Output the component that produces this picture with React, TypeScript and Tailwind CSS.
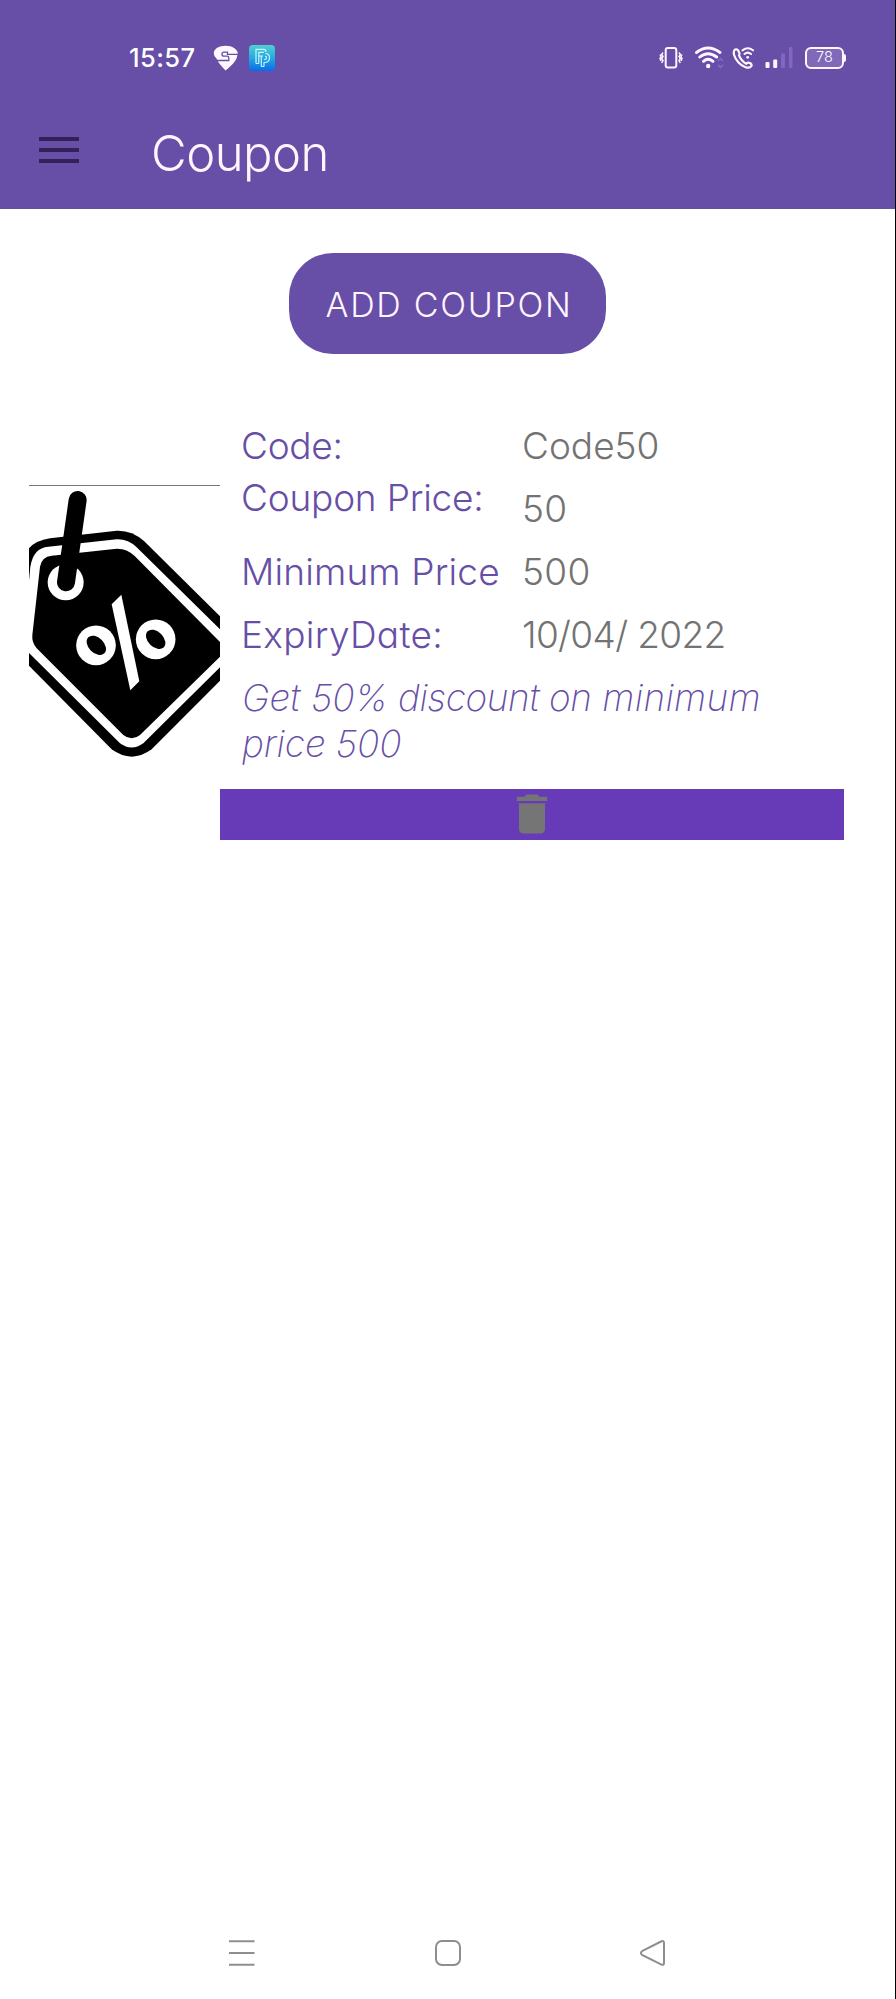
import type { ReactNode } from "react";

const purple = "#674ea7";

function StatusBar() {
  return (
    <div className="flex h-[115px] items-center pl-[129px] pr-[49px] text-white">
      <span className="w-[84px] whitespace-nowrap text-[25.500px] font-medium leading-none tracking-[0.4px]">15:57</span>
      <svg className="h-[26px] w-[26px]" viewBox="0 0 26 26">
        <path
          d="M12.500 25.500C9 22 6 18.500 4.300 15.300L3.500 13.500Q.8 11.500 .8 8.500C.8 3.500 6 .7 12.700 .7C19.500 .7 24 4 24.800 8L24.300 10.500C23.500 16.500 17.500 21.500 12.500 25.500Z"
          fill="#fdf8ff"
        />
        <path d="M25.500 9.300H14.500V7.200H11Q9 7.200 9 9.200T11 11.200H14Q15.800 11.200 15.800 13V15.500H3" fill="none" stroke={purple} strokeWidth="1.300" />
      </svg>
      <svg className="ml-[10px] h-[26px] w-[26px]" viewBox="0 0 26 26">
        <defs>
          <linearGradient id="app" x1="0" y1="0" x2="0" y2="1">
            <stop offset="0" stopColor="#4fd0cf" />
            <stop offset="0.500" stopColor="#25a9e2" />
            <stop offset="1" stopColor="#0a6be8" />
          </linearGradient>
        </defs>
        <rect width="26" height="26" rx="4" fill="url(#app)" />
        <path d="M7 18.500V4.300H14.500Q17 4.300 17 7M9.800 18.500V7.300H15M9.800 11H14M7 18.500H9.800M12.300 21.500V11.500M15 21.500V17.500Q20.500 17.500 20.500 13T16.500 8.500M12.300 21.500H15M15 14.500H16Q17.500 14.500 17.500 12.800T16 11.300" fill="none" stroke="#c8f6ff" strokeWidth="1.200" />
      </svg>

      <div className="ml-auto flex items-center">
        <svg className="h-[24px] w-[24px]" viewBox="0 0 24 24" fill="none" stroke="#fff5ff">
          <rect x="6.700" y="2" width="10.600" height="19.500" rx="2.200" strokeWidth="2" />
          <path d="M4 6.500L2.700 8.500L4 10.500L2.700 12.500L4 14.500L2.700 17M1 8.500L2 10.500L1 12.500L2 15M20 6.500L21.300 8.500L20 10.500L21.300 12.500L20 14.500L21.300 17M23 8.500L22 10.500L23 12.500L22 15" strokeWidth="1.500" />
        </svg>
        <svg className="ml-[12px] h-[24px] w-[30px]" viewBox="0 0 30 24" fill="none" stroke="#fff5ff">
          <path d="M1.500 6.500Q13 -2.500 25 6.500M4.800 11Q13 4.300 21.700 11M8.500 15.300Q13 11.300 18 15.300" strokeWidth="2.900" strokeLinecap="round" />
          <circle cx="13.200" cy="20" r="2.200" fill="#fff5ff" stroke="none" />
          <path d="M23 15L25.500 12.500L28 15M23 19L25.500 21.500L28 19" stroke="#8d68cc" strokeWidth="1.500" />
        </svg>
        <svg className="ml-[7px] h-[24px] w-[24px]" viewBox="0 0 24 24" fill="none" stroke="#fff5ff">
          <path
            d="M7 9.300C8.500 7.500 5.500 2 3.200 3.500C.2 5.500 2.200 12 6.500 16.500C10.500 20.800 17 23.500 19.300 20.200C20.800 17.500 16 15.500 14.200 17.800C11.500 16.500 8 12.500 7 9.300Z"
            strokeWidth="2.200"
            strokeLinejoin="round"
          />
          <path d="M10.500 4.300Q15.800 .2 21 4.300M12.500 8Q15.800 5.200 19 8" strokeWidth="2.100" strokeLinecap="round" />
          <circle cx="15.700" cy="11.300" r="1.400" fill="#fff5ff" stroke="none" />
        </svg>
        <svg className="ml-[9px] h-[24px] w-[29px]" viewBox="0 0 29 24">
          <rect x="0.500" y="16" width="4" height="6" rx="1" fill="#fff5ff" />
          <rect x="8.200" y="13.500" width="4" height="8.500" rx="1" fill="#fff5ff" />
          <rect x="16" y="7.500" width="4" height="14.500" rx="1" fill="#8565c2" />
          <rect x="24" y="1" width="3.500" height="21" rx="1" fill="#8565c2" />
        </svg>
        <div className="ml-[11px] flex items-center">
          <div className="flex h-[22px] w-[39px] items-center justify-center rounded-[6px] border-2 border-[#fff5ff] bg-[#8069b8] text-[14.500px] leading-none">
            78
          </div>
          <div className="h-[8px] w-[2px] rounded-r bg-[#fff5ff]" />
        </div>
      </div>
    </div>
  );
}

function TagPicture() {
  return (
    <svg className="mt-[71px] h-[283px] w-[191px] shrink-0" viewBox="57 45 573 849">
      <rect x="57" y="45" width="573" height="3" fill="#777" />
      <path d="M57 235Q78 211 120 205L320 182Q365 180 402 213L630 439V632L425 838Q365 882 305 838L57 587Z" />
      <path d="M57 332L61 290Q70 233 115 230L320 208Q355 207 380 232L630 478V592L400 820Q365 845 330 820L57 549Z" fill="#fff" />
      <path d="M90 290Q95 260 125 257L320 236Q350 235 374 258L630 516V560L390 795Q365 815 340 795L80 535Q65 517 67 495Z" />
      <circle cx="167" cy="337" r="54" fill="#fff" />
      <path d="M203 90L168 337" stroke="#000" strokeWidth="54" strokeLinecap="round" />
      <path d="M305 403L334 374L388 634L361 661Z" fill="#fff" />
      <circle cx="258" cy="526" r="59.500" fill="#fff" />
      <ellipse cx="259" cy="526" rx="34" ry="23" transform="rotate(45 259 526)" />
      <circle cx="437" cy="508" r="59.500" fill="#fff" />
      <ellipse cx="437" cy="508" rx="34" ry="23" transform="rotate(45 437 508)" />
    </svg>
  );
}

function Label({ children, className }: { children: ReactNode; className: string }) {
  return <dt className={`whitespace-nowrap text-[37px] text-[#674ea7] ${className}`}>{children}</dt>;
}

function Value({ children, className }: { children: ReactNode; className: string }) {
  return <dd className={`whitespace-nowrap text-[37px] leading-[63px] text-[#737373] ${className}`}>{children}</dd>;
}

export default function App() {
  return (
    <div className="flex h-[1999px] w-[896px] flex-col border-r border-black bg-white font-['Inter',sans-serif] font-light [font-feature-settings:'cv11','ss03']">
      <header className="h-[209px] shrink-0 bg-[#674ea7]">
        <StatusBar />
        <div className="flex h-[94px] pl-[39px] text-white">
          <div className="mt-[22px] flex h-[26px] w-[40px] flex-col justify-between">
            <div className="h-[4px] bg-[#35205a]" />
            <div className="h-[4px] bg-[#35205a]" />
            <div className="h-[4px] bg-[#35205a]" />
          </div>
          <h1 className="ml-[72px] mt-[9px] text-[49px] leading-[60px] tracking-[-0.5px] text-[#fff5ff]">Coupon</h1>
        </div>
      </header>

      <main className="flex-1">
        <button className="mx-auto mt-[44px] flex h-[101px] w-[317px] items-center justify-center rounded-[44px] bg-[#674ea7] pl-[3px] pt-[2px] text-[34px] tracking-[1.7px] text-[#fff5ff]">
          ADD COUPON
        </button>

        <section className="mt-[60px] flex pl-[29px]">
          <TagPicture />
          <div className="w-[624px]">
            <dl className="grid grid-cols-[281px_1fr] grid-rows-[63px_63px_63px_63px] pl-[21px]">
              <Label className="leading-[63px] tracking-[-0.3px]">Code:</Label>
              <Value className="tracking-[0px]">Code50</Value>
              <Label className="leading-[41px] tracking-[-0.2px]">Coupon Price:</Label>
              <Value className="tracking-[0.3px]">50</Value>
              <Label className="leading-[63px] tracking-[0.15px]">Minimum Price</Label>
              <Value className="tracking-[0.3px]">500</Value>
              <Label className="leading-[63px] tracking-[0.3px]">ExpiryDate:</Label>
              <Value className="tracking-[-0.65px]">10/04/ 2022</Value>
            </dl>
            <p className="ml-[22px] mt-[9px] whitespace-nowrap text-[37px] font-extralight italic leading-[46px] text-[#674ea7]">
              <span className="block">
                <span className="tracking-[0.1px]">Get 50%</span>
                <span className="tracking-[-0.4px]"> discount on</span>
                <span className="tracking-[0.3px]"> minimum</span>
              </span>
              <span className="block tracking-[-0.1px]">price 500</span>
            </p>
            <div className="mt-[22px] flex h-[51px] items-center justify-center bg-[#673ab7] pb-px">
              <svg className="h-[52px] w-[52px] shrink-0" viewBox="0 0 24 24" fill="#757575">
                <path d="M6 19c0 1.100.9 2 2 2h8c1.100 0 2-.9 2-2V7H6v12zM19 4h-3.500l-1-1h-5l-1 1H5v2h14V4z" />
              </svg>
            </div>
          </div>
        </section>
      </main>

      <nav className="flex h-[92px] shrink-0 items-center pl-[228px]">
        <svg className="h-[28px] w-[28px]" viewBox="0 0 28 28" stroke="#8e8e8e" strokeWidth="2">
          <path d="M1 2.300H26.500M1 14H26.500M1 25.700H26.500" />
        </svg>
        <svg className="ml-[178px] h-[28px] w-[28px]" viewBox="0 0 28 28" fill="none" stroke="#8e8e8e" strokeWidth="2">
          <rect x="2" y="2" width="24" height="24" rx="6" />
        </svg>
        <svg className="ml-[177px] h-[28px] w-[28px]" viewBox="0 0 28 28" fill="none" stroke="#8e8e8e" strokeWidth="2">
          <path d="M3 12.200L22.500 2.300Q25 1.500 25 4V24Q25 26.500 22.500 25.600L3 15.800Q.800 14 3 12.200Z" />
        </svg>
      </nav>
    </div>
  );
}
